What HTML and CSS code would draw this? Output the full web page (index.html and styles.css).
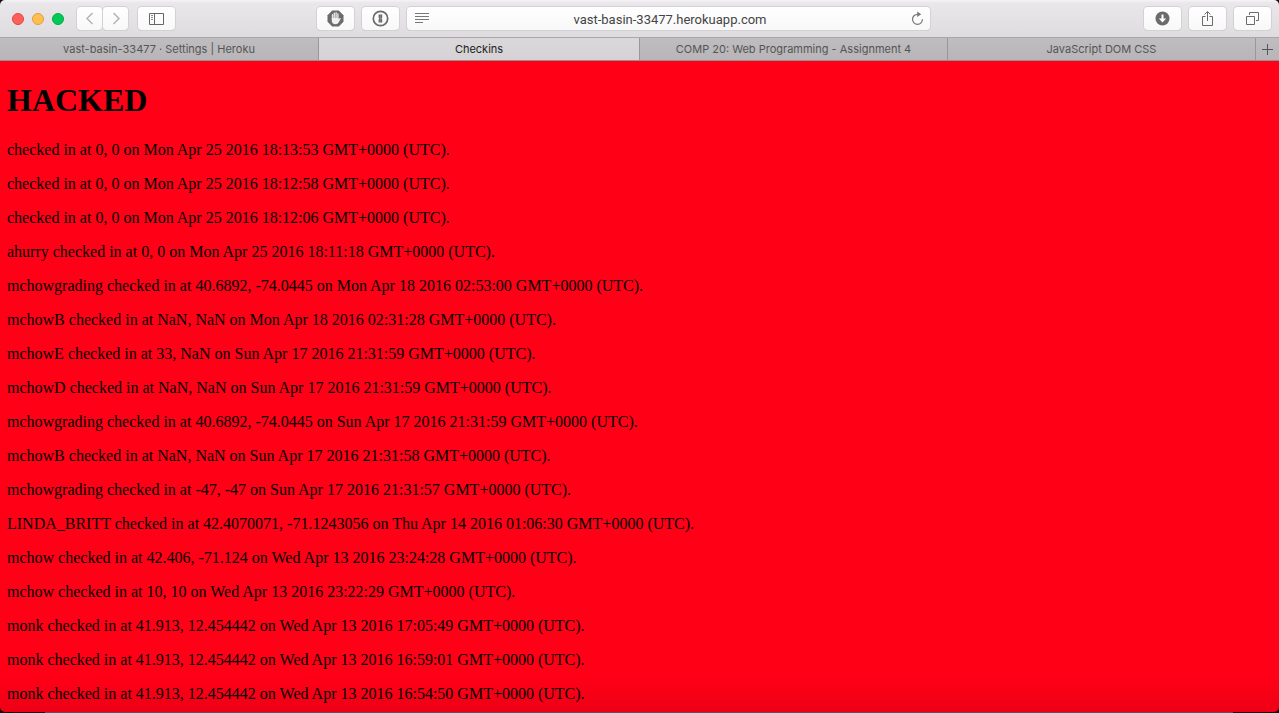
FILE: index.html
```html
<!DOCTYPE html>
<html lang="en">
<head>
<meta charset="utf-8">
<title>Checkins</title>
<link rel="stylesheet" href="styles.css">
</head>
<body>
<div class="window">
  <header class="toolbar">
    <div class="lights">
      <button class="light close" aria-label="Close"></button>
      <button class="light minimize" aria-label="Minimize"></button>
      <button class="light maximize" aria-label="Zoom"></button>
    </div>
    <div class="history">
      <button class="btn nav" aria-label="Back"><svg width="26" height="23" viewBox="0 0 26 23"><path d="M15.500 6L10 11.500l5.500 5.500" stroke="#b4b4b4" stroke-width="1.500"/></svg></button>
      <button class="btn nav" aria-label="Forward"><svg width="26" height="23" viewBox="0 0 26 23"><path d="M10.500 6l5.500 5.500-5.500 5.500" stroke="#b4b4b4" stroke-width="1.500"/></svg></button>
    </div>
    <button class="btn" aria-label="Sidebar"><svg width="15" height="13" viewBox="0 0 15 13"><path d="M.5 1.500h14v11H.5zM5.500 1.500v11" stroke="#666"/><path d="M2 3.500h2M2 5.500h2M2 7.500h2" stroke="#888"/></svg></button>
    <div class="center">
      <button class="btn" aria-label="Ad blocker"><svg width="17" height="17" viewBox="0 0 17 17"><path d="M5.200.500h6.600l4.700 4.700v6.600l-4.700 4.700H5.200L.5 11.800V5.200z" fill="#6b6b6b"/><path d="M5.500 9.500V4.800M7.300 8V3.300M9.100 8V2.800M10.900 8.500V4" stroke="#e4e4e4" stroke-width="1.400" stroke-linecap="round"/><path d="M4.800 8h6.800v1.500l1.200-1.500q1-.3 1 .5l-2 3.800q-1 2-3.200 2-3.800 0-3.800-3.800z" fill="#f0f0f0"/></svg></button>
      <button class="btn" aria-label="Password manager"><svg width="17" height="17" viewBox="0 0 17 17"><circle cx="8.500" cy="8.500" r="7.200" stroke="#6b6b6b" stroke-width="1.700"/><path d="M6.600 4.500h3.600v3.200l-.8.800.8.800v3.200H6.600V9.300l.8-.8-.8-.8z" fill="#6b6b6b"/><path d="M8.400 5.500v6" stroke="#aaa" stroke-width=".5"/></svg></button>
      <form class="address">
        <svg width="14" height="11" viewBox="0 0 14 11"><path d="M0 .5h14M0 3.500h14M0 6.500h14M0 9.500h8" stroke="#777"/></svg>
        <input type="text" aria-label="Address" value="vast-basin-33477.herokuapp.com">
        <button class="reload" type="button" aria-label="Reload"><svg width="13" height="15" viewBox="0 0 13 15"><path d="M6.500 3.300A5 5 0 1 0 11.500 8.300" stroke="#777" stroke-width="1.200"/><path d="M6.200.5v5.400l4-2.700z" fill="#777"/></svg></button>
      </form>
    </div>
    <div class="actions">
      <button class="btn" aria-label="Downloads"><svg width="15" height="15" viewBox="0 0 15 15"><circle cx="7.500" cy="7.500" r="7" fill="#6b6b6b"/><path d="M6.500 3.500h2v4h2.700L7.500 11.500 3.800 7.500h2.700z" fill="#fff"/></svg></button>
      <button class="btn" aria-label="Share"><svg width="13" height="17" viewBox="0 0 13 17"><path d="M4.500 6.500h-3v9h10v-9h-3M6.500 11V2M3.500 4.500l3-3 3 3" stroke="#6b6b6b"/></svg></button>
      <button class="btn" aria-label="Show all tabs"><svg width="13" height="13" viewBox="0 0 13 13"><path d="M.5 4.500h8v8h-8zM3.500 3v-2.500h9v8h-2.500" stroke="#6b6b6b"/></svg></button>
    </div>
  </header>
  <nav class="tabs">
    <a class="tab" href="#">vast-basin-33477 · Settings | Heroku</a>
    <a class="tab active" href="#">Checkins</a>
    <a class="tab" href="#">COMP 20: Web Programming - Assignment 4</a>
    <a class="tab" href="#">JavaScript DOM CSS</a>
    <button class="newtab" aria-label="New tab"><svg width="11" height="11" viewBox="0 0 11 11"><path d="M0 5.500h11M5.500 0v11" stroke="#555"/></svg></button>
  </nav>
  <main class="page">
    <h1>HACKED</h1>
    <p>checked in at 0, 0 on Mon Apr 25 2016 18:13:53 GMT+0000 (UTC).</p>
    <p>checked in at 0, 0 on Mon Apr 25 2016 18:12:58 GMT+0000 (UTC).</p>
    <p>checked in at 0, 0 on Mon Apr 25 2016 18:12:06 GMT+0000 (UTC).</p>
    <p>ahurry checked in at 0, 0 on Mon Apr 25 2016 18:11:18 GMT+0000 (UTC).</p>
    <p>mchowgrading checked in at 40.6892, -74.0445 on Mon Apr 18 2016 02:53:00 GMT+0000 (UTC).</p>
    <p>mchowB checked in at NaN, NaN on Mon Apr 18 2016 02:31:28 GMT+0000 (UTC).</p>
    <p>mchowE checked in at 33, NaN on Sun Apr 17 2016 21:31:59 GMT+0000 (UTC).</p>
    <p>mchowD checked in at NaN, NaN on Sun Apr 17 2016 21:31:59 GMT+0000 (UTC).</p>
    <p>mchowgrading checked in at 40.6892, -74.0445 on Sun Apr 17 2016 21:31:59 GMT+0000 (UTC).</p>
    <p>mchowB checked in at NaN, NaN on Sun Apr 17 2016 21:31:58 GMT+0000 (UTC).</p>
    <p>mchowgrading checked in at -47, -47 on Sun Apr 17 2016 21:31:57 GMT+0000 (UTC).</p>
    <p>LINDA_BRITT checked in at 42.4070071, -71.1243056 on Thu Apr 14 2016 01:06:30 GMT+0000 (UTC).</p>
    <p>mchow checked in at 42.406, -71.124 on Wed Apr 13 2016 23:24:28 GMT+0000 (UTC).</p>
    <p>mchow checked in at 10, 10 on Wed Apr 13 2016 23:22:29 GMT+0000 (UTC).</p>
    <p>monk checked in at 41.913, 12.454442 on Wed Apr 13 2016 17:05:49 GMT+0000 (UTC).</p>
    <p>monk checked in at 41.913, 12.454442 on Wed Apr 13 2016 16:59:01 GMT+0000 (UTC).</p>
    <p>monk checked in at 41.913, 12.454442 on Wed Apr 13 2016 16:54:50 GMT+0000 (UTC).</p>
  </main>
</div>
</body>
</html>
```

FILE: styles.css
```css
* { box-sizing: border-box; }

body {
  margin: 0;
  height: 100vh;
  padding-bottom: 1px;
  overflow: hidden;
  background: linear-gradient(to right, #111 45px, #555 45px, #555 calc(100% - 46px), #111 calc(100% - 46px));
}

svg { display: block; flex: none; fill: none; }

button { padding: 0; border: 0; background: none; }

.window {
  display: flex;
  flex-direction: column;
  height: 100%;
  overflow: hidden;
  border-radius: 5px;
}

.toolbar {
  display: flex;
  flex: none;
  align-items: center;
  height: 37px;
  padding: 0 8px 0 12px;
  background: linear-gradient(#f5f3f5, #e9e7e9 3px, #dedcde);
}

.lights { display: flex; gap: 8px; margin-right: 13px; }

.light { width: 12px; height: 12px; border: 1px solid; border-radius: 50%; }
.close { background: #ff5f5a; border-color: #e2463f; }
.minimize { background: #ffbe4f; border-color: #e0a03a; }
.maximize { background: #00ca56; border-color: #00ae42; }

.btn {
  display: flex;
  flex: none;
  align-items: center;
  justify-content: center;
  width: 37px;
  height: 23px;
  border-radius: 4px;
  background: linear-gradient(#fff, #f8f8f8);
  box-shadow: 0 0 0 1px #d3d1d3, 0 1px 0 0 #c3c1c3;
}

.history { display: flex; gap: 1px; margin-right: 10px; }
.nav { width: 25px; }

.center {
  display: flex;
  flex: 1;
  gap: 8px;
  margin: 0 214px 0 142px;
}

.address {
  display: flex;
  flex: 1;
  align-items: center;
  height: 23px;
  margin: 0;
  padding: 0 6px 0 8px;
  border-radius: 4px;
  background: linear-gradient(#fff, #f8f8f8);
  box-shadow: 0 0 0 1px #d3d1d3, 0 1px 0 0 #c3c1c3;
}

.address input {
  flex: 1;
  min-width: 0;
  height: 23px;
  padding: 2px 0 0;
  border: 0;
  outline: 0;
  background: none;
  color: #444;
  font: 13px/21px Roboto, sans-serif;
  text-align: center;
}

.actions { display: flex; gap: 8px; }

.tabs {
  display: grid;
  flex: none;
  grid-template-columns: 319fr 321fr 308fr 308fr 23px;
  height: 24px;
  border-top: 1px solid #a9a7a9;
  border-bottom: 1px solid #918f91;
  background: linear-gradient(#bfbdbf, #b7b5b7);
}

.tab {
  overflow: hidden;
  border-right: 1px solid #999799;
  color: #555;
  font: 11px/22px Inter, sans-serif;
  text-align: center;
  text-decoration: none;
  white-space: nowrap;
}

.active { background: linear-gradient(#dad8da, #d4d2d4); color: #222; }

.newtab { display: flex; align-items: center; justify-content: center; }

.page {
  flex: 1;
  min-height: 0;
  overflow: hidden;
  padding: 0 7px;
  background: linear-gradient(to top, #ee0016, #ff0016 35px);
  color: #000;
  font: 16px/18px "Liberation Serif", serif;
}

h1 { margin: 21px 0 22px; font-size: 32px; line-height: 37px; }

p { margin: 16px 0; }
```
